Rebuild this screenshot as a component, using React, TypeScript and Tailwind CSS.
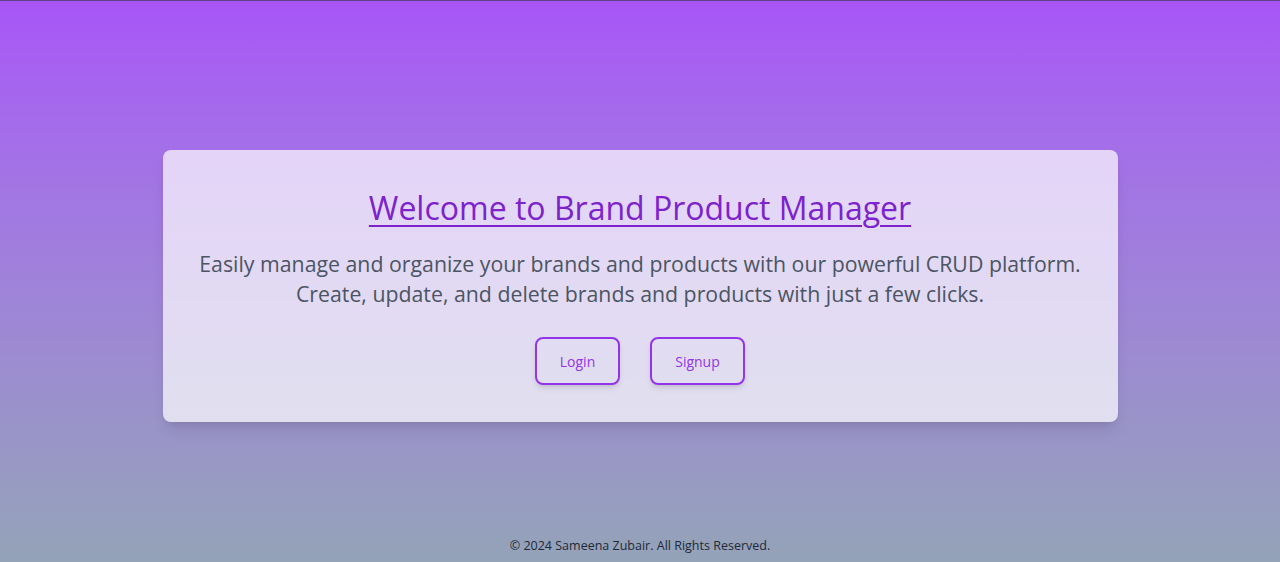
export default function App() {
  return (
    <div
      className="min-h-screen flex flex-col border-t border-[#5e4386] bg-gradient-to-b from-[#a855f7] to-[#94a3b8]"
      style={{ fontFamily: '"Open Sans", "Noto Sans", sans-serif' }}
    >
      <main className="flex-1 flex items-center justify-center pt-10">
        <div className="w-[955px] bg-white/70 rounded-lg shadow-lg px-6 pt-[38px] pb-[37px] text-center">
          <h1 className="text-[32px] leading-[40px] text-[#7e22ce] underline underline-offset-[5px] decoration-2 mb-[21px]">
            Welcome to Brand Product Manager
          </h1>
          <p className="text-[21.3px] leading-[30px] text-[#4b5563] mb-[28px] whitespace-nowrap">
            Easily manage and organize your brands and products with our powerful CRUD platform.
            <br />
            Create, update, and delete brands and products with just a few clicks.
          </p>
          <div className="flex justify-center gap-[30px]">
            <button className="w-[85px] h-[48px] border-2 border-[#9333ea] rounded-lg text-[14px] text-[#9333ea] shadow-md">
              Login
            </button>
            <button className="w-[95px] h-[48px] border-2 border-[#9333ea] rounded-lg text-[14px] text-[#9333ea] shadow-md">
              Signup
            </button>
          </div>
        </div>
      </main>
      <footer className="text-center text-[12.5px] leading-[20px] text-[#1f2937] pt-[5px] pb-[6px]">
        © 2024 Sameena Zubair. All Rights Reserved.
      </footer>
    </div>
  );
}
